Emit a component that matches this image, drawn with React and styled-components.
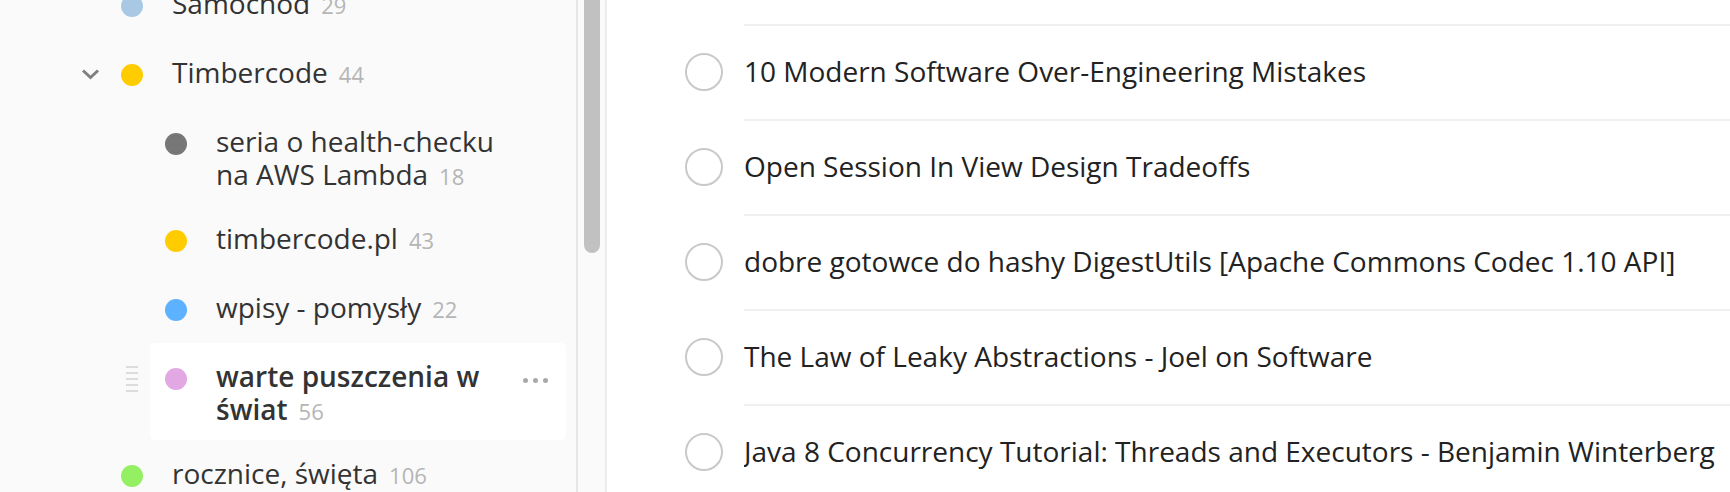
import React from "react";
import styled, { createGlobalStyle } from "styled-components";

const GlobalStyle = createGlobalStyle`
  * { box-sizing: border-box; }
  html, body { margin: 0; padding: 0; height: 100%; overflow: hidden; background: #fff; }
  body {
    font-family: "Open Sans", "Noto Sans", "DejaVu Sans", sans-serif;
    -webkit-font-smoothing: antialiased;
  }
  #root { height: 100%; }
`;

const Layout = styled.div`
  display: flex;
  height: 492px;
  overflow: hidden;
`;

const Sidebar = styled.aside`
  flex: none;
  display: flex;
  width: 607px;
  height: 100%;
  background: #fafafa;
  border-right: 2px solid #ececec;
  overflow: hidden;
`;

const ProjectList = styled.ul`
  flex: none;
  width: 576px;
  margin: -30px 0 0;
  padding: 0 10px 0 62px;
  list-style: none;
`;

const ScrollTrack = styled.div`
  flex: none;
  width: 29px;
  border-left: 2px solid #e6e6e6;
  padding-left: 6px;
  overflow: hidden;
`;

const ScrollThumb = styled.div`
  width: 16px;
  height: 300px;
  margin-top: -47px;
  border-radius: 8px;
  background: #c1c1c1;
`;

const ProjectRow = styled.li`
  display: flex;
  margin-left: ${(p) => p.$depth * 44}px;
`;

const Gutter = styled.div`
  flex: none;
  width: 44px;
  display: flex;
  align-items: flex-start;
`;

const Chevron = styled.svg`
  margin: 29px 0 0 19px;
`;

const Handle = styled.span`
  display: flex;
  flex-direction: column;
  gap: 4px;
  margin: 23px 0 0 20px;
`;

const HandleBar = styled.span`
  width: 12px;
  height: 2px;
  background: #dcdcdc;
`;

const ProjectCard = styled.div`
  flex: 1;
  display: flex;
  align-items: flex-start;
  min-height: 69px;
  padding: 17px 0 12px 15px;
  border-radius: 5px;
  background: ${(p) => (p.$active ? "#ffffff" : "transparent")};
`;

const DotBox = styled.span`
  flex: none;
  display: flex;
  align-items: center;
  width: 22px;
  height: 35px;
  padding-top: 2px;
  margin-right: 29px;
`;

const Dot = styled.span`
  width: 22px;
  height: 22px;
  border-radius: 50%;
  background: ${(p) => p.$color};
`;

const Name = styled.span`
  flex: 1;
  min-width: 0;
  font-size: 28px;
  line-height: 33px;
  color: #333333;
  font-weight: ${(p) => (p.$bold ? 600 : 400)};
`;

const Count = styled.span`
  margin-left: 11px;
  font-size: 22px;
  font-weight: 400;
  color: #b5b5b5;
`;

const Actions = styled.span`
  flex: none;
  display: flex;
  align-items: center;
  gap: 5px;
  width: 61px;
  height: 33px;
  padding: 8px 0 0 18px;
  visibility: ${(p) => (p.$visible ? "visible" : "hidden")};
`;

const MoreDot = styled.span`
  width: 5px;
  height: 5px;
  border-radius: 50%;
  background: #a9a9a9;
`;

const Main = styled.main`
  flex: 1;
  height: 100%;
  background: #ffffff;
  padding: 24px 0 0 78px;
  overflow: hidden;
`;

const TaskRow = styled.div`
  display: flex;
  height: 95px;
`;

const CheckCell = styled.div`
  flex: none;
  display: flex;
  align-items: center;
  width: 38px;
  margin-right: 21px;
  padding-top: 1px;
`;

const Check = styled.span`
  width: 38px;
  height: 38px;
  border: 2px solid #c9c9c9;
  border-radius: 50%;
`;

const TaskContent = styled.div`
  flex: 1;
  display: flex;
  align-items: center;
  min-width: 0;
  padding-bottom: 4px;
  border-top: 2px solid #f0f0f0;
  font-size: 28px;
  color: #222222;
  white-space: nowrap;
  overflow: hidden;
`;

const projects = [
  { name: "Samochód", count: 29, color: "#a8c8e4", depth: 0 },
  { name: "Timbercode", count: 44, color: "#ffcc00", depth: 0, expanded: true },
  { name: "seria o health-checku na AWS Lambda", count: 18, color: "#777777", depth: 1 },
  { name: "timbercode.pl", count: 43, color: "#ffcc00", depth: 1 },
  { name: "wpisy - pomysły", count: 22, color: "#5db2ff", depth: 1 },
  { name: "warte puszczenia w świat", count: 56, color: "#e2a8e4", depth: 1, active: true },
  { name: "rocznice, święta", count: 106, color: "#95ef63", depth: 0 },
];

const tasks = [
  "10 Modern Software Over-Engineering Mistakes",
  "Open Session In View Design Tradeoffs",
  "dobre gotowce do hashy DigestUtils [Apache Commons Codec 1.10 API]",
  "The Law of Leaky Abstractions - Joel on Software",
  "Java 8 Concurrency Tutorial: Threads and Executors - Benjamin Winterberg",
];

export default function App() {
  return (
    <>
      <GlobalStyle />
      <Layout>
        <Sidebar>
          <ProjectList>
            {projects.map((p) => (
              <ProjectRow key={p.name} $depth={p.depth}>
                <Gutter>
                  {p.expanded && (
                    <Chevron width="19" height="12" viewBox="0 0 19 12">
                      <path
                        d="M2 2.5 L9.5 9.5 L17 2.5"
                        fill="none"
                        stroke="#808080"
                        strokeWidth="3"
                        strokeLinejoin="miter"
                      />
                    </Chevron>
                  )}
                  {p.active && (
                    <Handle>
                      <HandleBar />
                      <HandleBar />
                      <HandleBar />
                      <HandleBar />
                      <HandleBar />
                    </Handle>
                  )}
                </Gutter>
                <ProjectCard $active={p.active}>
                  <DotBox>
                    <Dot $color={p.color} />
                  </DotBox>
                  <Name $bold={p.active}>
                    {p.name}
                    <Count>{p.count}</Count>
                  </Name>
                  <Actions $visible={p.active}>
                    <MoreDot />
                    <MoreDot />
                    <MoreDot />
                  </Actions>
                </ProjectCard>
              </ProjectRow>
            ))}
          </ProjectList>
          <ScrollTrack>
            <ScrollThumb />
          </ScrollTrack>
        </Sidebar>
        <Main>
          {tasks.map((t) => (
            <TaskRow key={t}>
              <CheckCell>
                <Check />
              </CheckCell>
              <TaskContent>{t}</TaskContent>
            </TaskRow>
          ))}
        </Main>
      </Layout>
    </>
  );
}
